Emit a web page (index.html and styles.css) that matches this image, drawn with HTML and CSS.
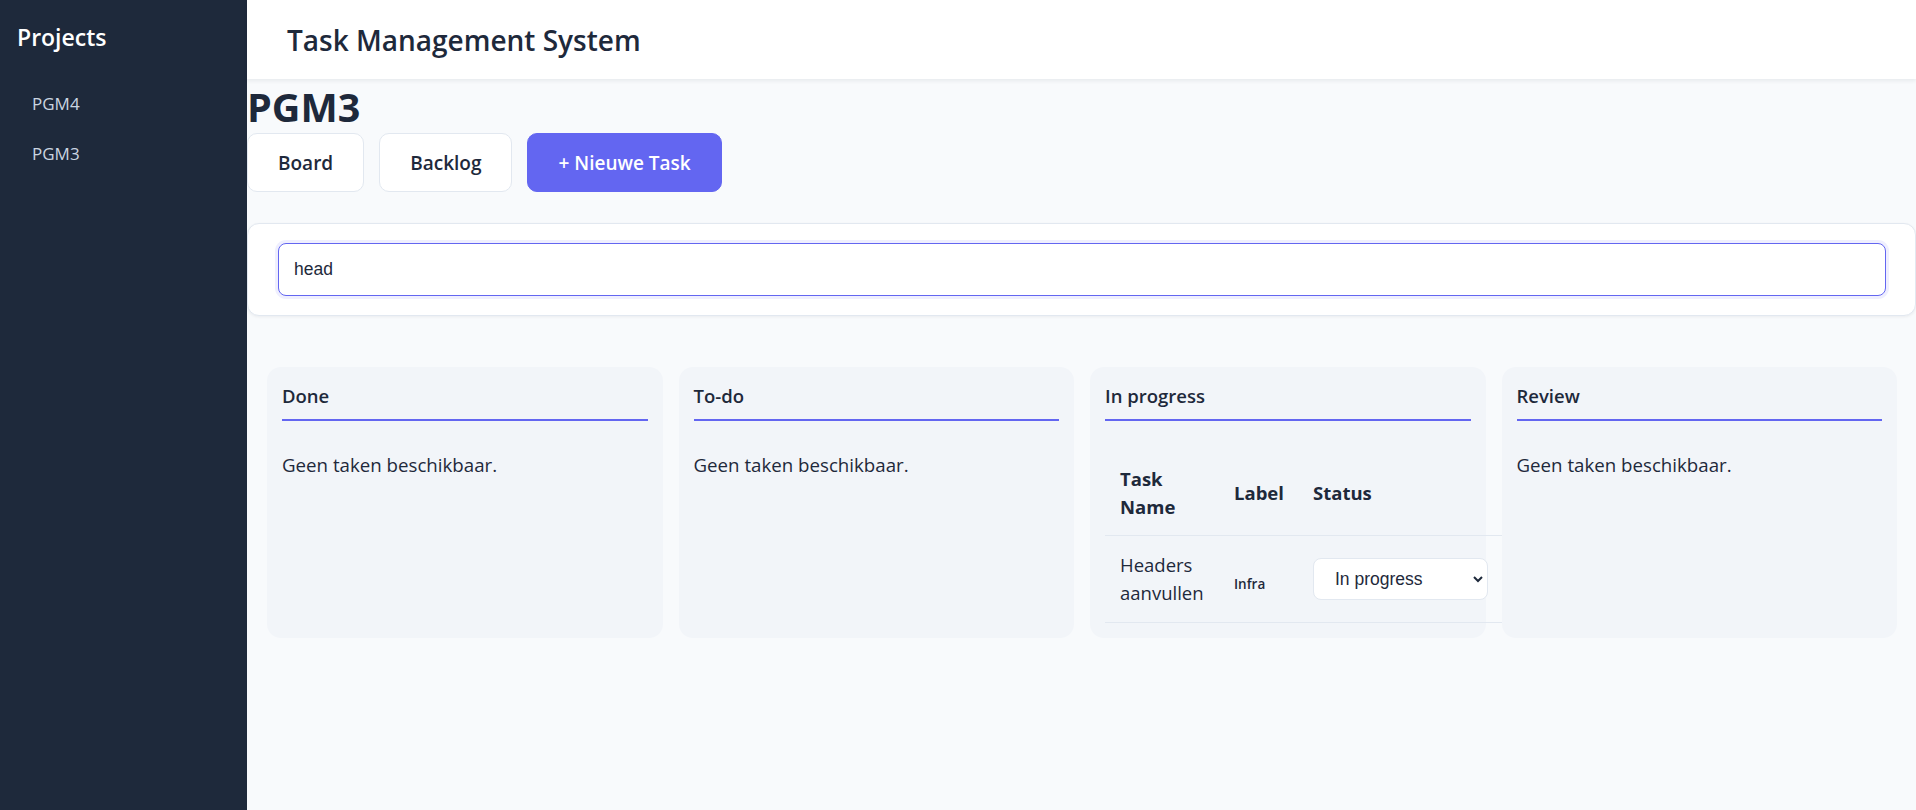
FILE: index.html
```html
<!DOCTYPE html>
<html lang="nl">
<head>
<meta charset="utf-8">
<title>Task Management System</title>
<link rel="stylesheet" href="styles.css">
</head>
<body>
<aside class="sidebar">
  <h2 class="sidebar-title">Projects</h2>
  <ul class="project-list">
    <li class="project-item">PGM4</li>
    <li class="project-item">PGM3</li>
  </ul>
</aside>
<div class="main">
  <header class="topbar">
    <h1 class="app-title">Task Management System</h1>
  </header>
  <section class="project">
    <h2 class="project-title">PGM3</h2>
    <div class="actions">
      <button class="btn">Board</button>
      <button class="btn">Backlog</button>
      <button class="btn btn-primary">+ Nieuwe Task</button>
    </div>
    <div class="search-card">
      <input class="search-input" type="text" value="head">
    </div>
    <div class="board">
      <div class="column">
        <h3 class="column-title">Done</h3>
        <p class="empty">Geen taken beschikbaar.</p>
      </div>
      <div class="column">
        <h3 class="column-title">To-do</h3>
        <p class="empty">Geen taken beschikbaar.</p>
      </div>
      <div class="column">
        <h3 class="column-title">In progress</h3>
        <table class="task-table">
          <colgroup>
            <col class="col-name">
            <col class="col-label">
            <col class="col-status">
          </colgroup>
          <thead>
            <tr><th>Task Name</th><th>Label</th><th>Status</th></tr>
          </thead>
          <tbody>
            <tr>
              <td>Headers aanvullen</td>
              <td class="label-cell"><span class="label">Infra</span></td>
              <td>
                <div class="select-wrap">
                  <select class="status-select">
                    <option>Done</option>
                    <option>To-do</option>
                    <option selected>In progress</option>
                    <option>Review</option>
                  </select>
                  <svg class="chevron" width="10" height="7" viewBox="0 0 10 7"><path d="M1 1l4 4 4-4" fill="none" stroke="#1e293b" stroke-width="2"/></svg>
                </div>
              </td>
            </tr>
          </tbody>
        </table>
      </div>
      <div class="column">
        <h3 class="column-title">Review</h3>
        <p class="empty">Geen taken beschikbaar.</p>
      </div>
    </div>
  </section>
</div>
</body>
</html>
```

FILE: styles.css
```css
* { box-sizing: border-box; }

html, body {
  margin: 0;
  height: 100%;
}

body {
  display: flex;
  font-family: "Open Sans", "Noto Sans", sans-serif;
  color: #1e293b;
  background: #f8fafc;
}

.sidebar {
  width: 247px;
  flex-shrink: 0;
  background: #1e293b;
  padding: 23px 17px;
}

.sidebar-title {
  margin: 0 0 28px;
  font-size: 23px;
  line-height: 28px;
  font-weight: 600;
  color: #ffffff;
}

.project-list {
  list-style: none;
  margin: 0;
  padding: 0;
}

.project-item {
  padding: 12px 15px;
  font-size: 17px;
  line-height: 26px;
  color: #cbd5e1;
}

.main {
  flex: 1;
  min-width: 0;
  background: #f8fafc;
}

.topbar {
  height: 79px;
  background: #ffffff;
  padding: 0 40px;
  display: flex;
  align-items: center;
  box-shadow: 0 2px 4px rgba(15, 23, 42, 0.07);
  position: relative;
}

.app-title {
  margin: 0;
  font-size: 28px;
  font-weight: 600;
  color: #1e293b;
}

.project-title {
  margin: 5px 0 2px;
  font-size: 39.5px;
  line-height: 47px;
  font-weight: 700;
  color: #1e293b;
}

.actions {
  display: flex;
  gap: 15px;
}

.btn {
  height: 59px;
  padding: 0 30px;
  font-family: inherit;
  font-size: 19px;
  font-weight: 600;
  color: #1e293b;
  background: #ffffff;
  border: 1px solid #e2e8f0;
  border-radius: 10px;
}

.btn-primary {
  background: #6366f1;
  border-color: #6366f1;
  color: #ffffff;
}

.search-card {
  margin-top: 31px;
  background: #ffffff;
  border: 1px solid #e2e8f0;
  border-radius: 12px;
  padding: 19px 29px 19px 30px;
  box-shadow: 0 1px 3px rgba(15, 23, 42, 0.06);
}

.search-input {
  display: block;
  width: 100%;
  height: 53px;
  padding: 0 15px;
  font-family: "Liberation Sans", Arial, sans-serif;
  font-size: 17.5px;
  color: #1e293b;
  border: 1px solid #6366f1;
  border-radius: 8px;
  box-shadow: 0 0 0 3px rgba(99, 102, 241, 0.1);
  outline: none;
}

.board {
  display: grid;
  grid-template-columns: repeat(4, minmax(0, 1fr));
  gap: 16px;
  padding: 51px 19px 20px 20px;
}

.column {
  background: #f2f5f9;
  border-radius: 14px;
  padding: 15px;
  min-height: 269px;
  min-width: 0;
}

.column-title {
  margin: 0;
  padding-bottom: 9px;
  font-size: 18.5px;
  line-height: 27.75px;
  font-weight: 600;
  border-bottom: 2px solid #6366f1;
}

.empty {
  margin: 30px 0 0;
  font-size: 18.7px;
  line-height: 27.75px;
}

.task-table {
  margin-top: 29px;
  width: 398px;
  table-layout: fixed;
  border-collapse: collapse;
  font-size: 18.5px;
}

.col-name { width: 114px; }
.col-label { width: 79px; }
.col-status { width: 205px; }

.task-table th {
  padding: 15px;
  text-align: left;
  font-weight: 700;
  line-height: 27.75px;
  vertical-align: middle;
  border-bottom: 1px solid #e2e8f0;
}

.task-table td {
  padding: 15px;
  line-height: 27.75px;
  vertical-align: middle;
  border-bottom: 1px solid #e2e8f0;
}

.task-table td.label-cell {
  padding-top: 23px;
}

.label {
  font-size: 13.5px;
  font-weight: 600;
}

.select-wrap {
  position: relative;
  width: 175px;
}

.status-select {
  appearance: none;
  -webkit-appearance: none;
  display: block;
  width: 175px;
  height: 42px;
  padding: 0 30px 0 21px;
  font-family: "Liberation Sans", Arial, sans-serif;
  font-size: 17.5px;
  color: #1e293b;
  background: #ffffff;
  border: 1px solid #e2e8f0;
  border-radius: 8px;
}

.chevron {
  position: absolute;
  right: 5px;
  top: 18px;
  pointer-events: none;
}
```
